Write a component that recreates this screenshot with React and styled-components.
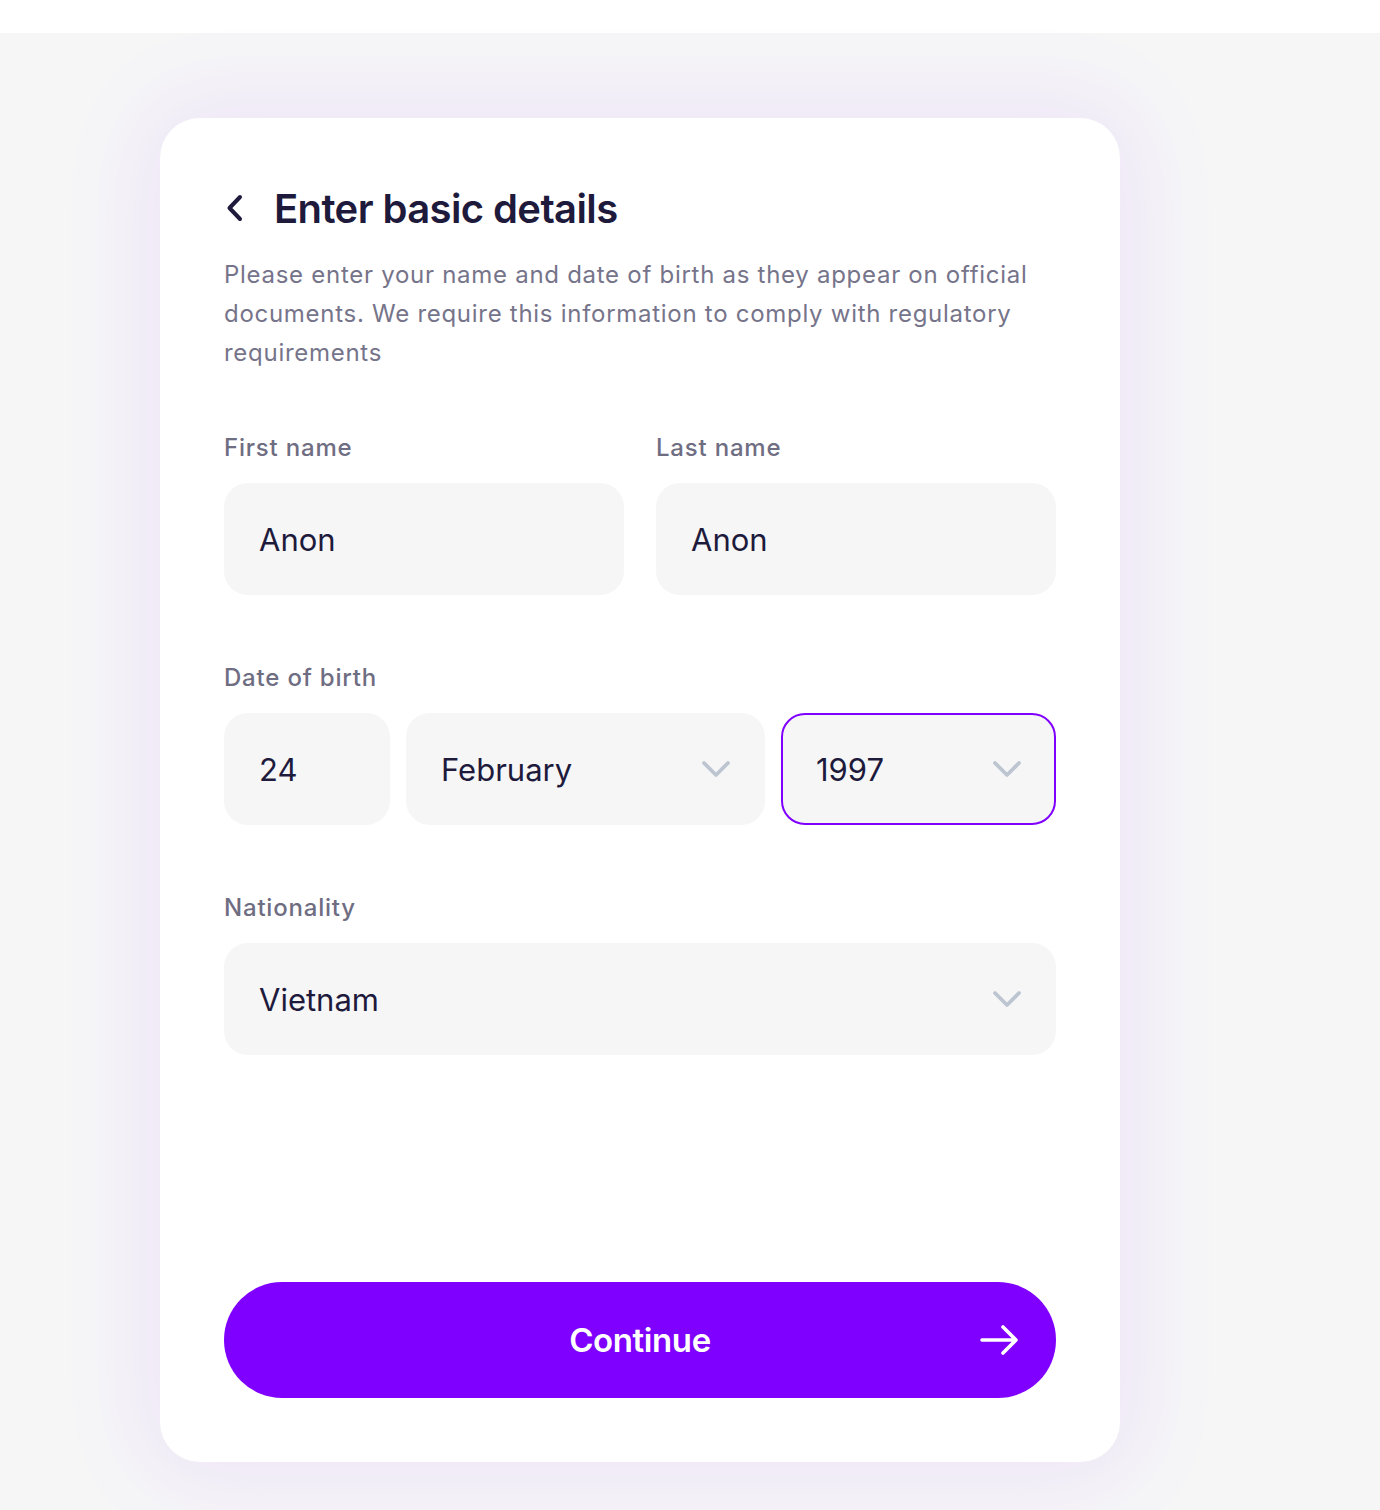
import React from "react";
import styled, { createGlobalStyle } from "styled-components";

const GlobalStyle = createGlobalStyle`
  html, body {
    margin: 0;
    padding: 0;
    background: #ffffff;
  }
  body {
    font-family: Inter, "Noto Sans", sans-serif;
    -webkit-font-smoothing: antialiased;
  }
`;

const TopBar = styled.div`
  height: 33px;
  background: #ffffff;
`;

const Stage = styled.main`
  min-height: 1477px;
  box-sizing: border-box;
  background: #f6f6f7;
  padding: 85px 160px 0;
`;

const Card = styled.section`
  width: 960px;
  height: 1344px;
  box-sizing: border-box;
  background: #ffffff;
  border-radius: 40px;
  padding: 64px;
  display: flex;
  flex-direction: column;
  box-shadow: 0 0 90px 20px rgba(128, 0, 255, 0.07);
`;

const Header = styled.div`
  display: flex;
  align-items: center;
  gap: 28px;
  height: 56px;
  margin-top: -2px;
`;

const BackButton = styled.button`
  border: none;
  background: none;
  padding: 0;
  width: 22px;
  height: 36px;
  display: flex;
  align-items: center;
  color: #1e1a3c;
  cursor: pointer;
`;

const Title = styled.h1`
  margin: 0;
  font-size: 40px;
  font-weight: 600;
  letter-spacing: -0.6px;
  color: #1e1a3c;
`;

const Description = styled.p`
  margin: 19px 0 0;
  font-size: 24px;
  line-height: 39px;
  color: #76748a;
  letter-spacing: 0.72px;
`;

const Row = styled.div`
  display: flex;
  gap: ${(p) => p.$gap || 32}px;
  margin-top: ${(p) => p.$top}px;
`;

const Field = styled.div`
  flex: 1;
  display: flex;
  flex-direction: column;
`;

const Label = styled.label`
  font-size: 24px;
  font-weight: 500;
  color: #6f6d82;
  line-height: 30px;
  letter-spacing: 0.8px;
  margin-bottom: 20px;
`;

const Box = styled.div`
  flex: ${(p) => (p.$w ? `0 0 ${p.$w}px` : p.$grow ? "1 1 0" : "none")};
  height: 112px;
  box-sizing: border-box;
  border-radius: 24px;
  background: #f6f6f7;
  border: 2px solid ${(p) => (p.$active ? "#8000ff" : "transparent")};
  display: flex;
  align-items: center;
  justify-content: space-between;
  padding: 0 32px 0 33px;
  font-size: 31px;
  color: #1e1a3c;
`;

const Chevron = styled.svg`
  width: 30px;
  height: 18px;
  color: #bcc5d0;
  flex: none;
`;

const Spacer = styled.div`
  flex: 1;
`;

const ContinueButton = styled.button`
  position: relative;
  flex: none;
  height: 116px;
  border: none;
  border-radius: 58px;
  background: #8000ff;
  color: #ffffff;
  font-family: Inter, "Noto Sans", sans-serif;
  font-size: 33px;
  font-weight: 600;
  letter-spacing: -0.4px;
  display: flex;
  align-items: center;
  justify-content: center;
  cursor: pointer;
`;

const ArrowIcon = styled.svg`
  position: absolute;
  right: 34px;
  top: 50%;
  transform: translateY(-50%);
  width: 44px;
  height: 44px;
`;

const Caret = () => (
  <Chevron viewBox="0 0 30 18" fill="none">
    <path d="M3 3l12 12L27 3" stroke="currentColor" strokeWidth="3.8" strokeLinecap="round" strokeLinejoin="round" />
  </Chevron>
);

const Select = ({ value, w, grow, active }) => (
  <Box $w={w} $grow={grow} $active={active}>
    <span>{value}</span>
    <Caret />
  </Box>
);

export default function App() {
  return (
    <>
      <GlobalStyle />
      <TopBar />
      <Stage>
        <Card>
          <Header>
            <BackButton aria-label="Back">
              <svg width="22" height="36" viewBox="0 0 22 36" fill="none">
                <path d="M16 7L5.5 18 16 29" stroke="currentColor" strokeWidth="4" strokeLinecap="round" strokeLinejoin="round" />
              </svg>
            </BackButton>
            <Title>Enter basic details</Title>
          </Header>
          <Description>
            Please enter your name and date of birth as they appear on official documents. We require this information
            to comply with regulatory requirements
          </Description>

          <Row $top={61}>
            <Field>
              <Label>First name</Label>
              <Box>Anon</Box>
            </Field>
            <Field>
              <Label>Last name</Label>
              <Box>Anon</Box>
            </Field>
          </Row>

          <Row $top={68}>
            <Field>
              <Label>Date of birth</Label>
              <Row $gap={16} $top={0}>
                <Box $w={166}>24</Box>
                <Select value="February" grow />
                <Select value="1997" w={275} active />
              </Row>
            </Field>
          </Row>

          <Row $top={68}>
            <Field>
              <Label>Nationality</Label>
              <Select value="Vietnam" />
            </Field>
          </Row>

          <Spacer />

          <ContinueButton>
            Continue
            <ArrowIcon viewBox="0 0 44 44" fill="none">
              <path d="M4 22h34M25 9l13 13-13 13" stroke="#fff" strokeWidth="3.6" strokeLinecap="round" strokeLinejoin="round" />
            </ArrowIcon>
          </ContinueButton>
        </Card>
      </Stage>
    </>
  );
}
